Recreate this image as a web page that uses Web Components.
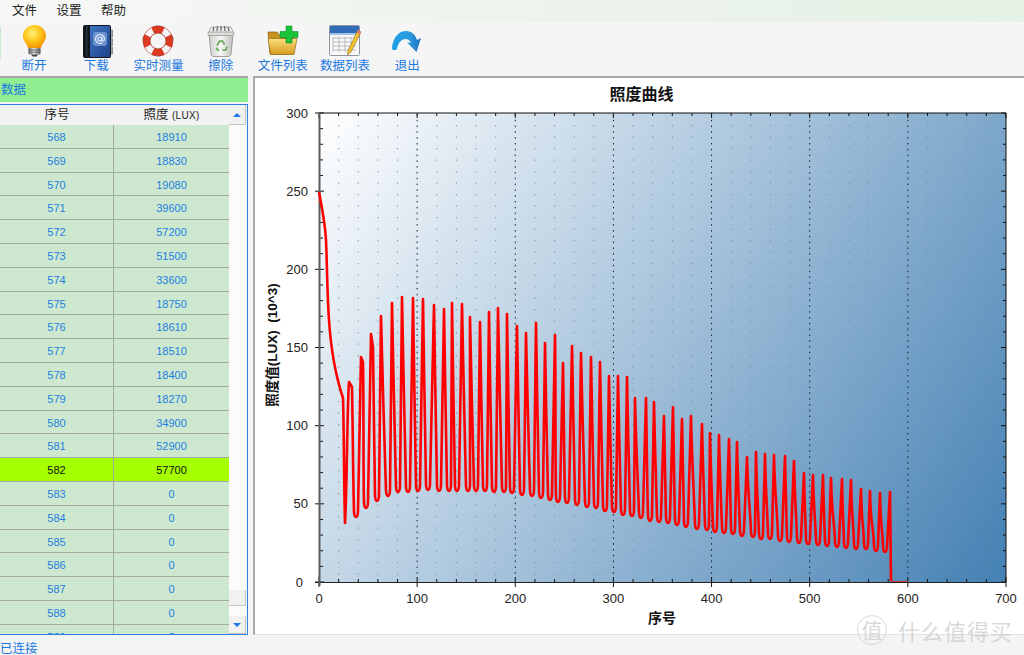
<!DOCTYPE html>
<html>
<head>
<meta charset="utf-8">
<title>照度曲线</title>
<style>
  html, body { margin: 0; padding: 0; height: 100%; overflow: hidden; background: #f4f4f4; }
  body { font-family: "Liberation Sans", "Noto Sans CJK SC", sans-serif; }
</style>
</head>
<body>
<app-window>
  <menu-bar slot="menu"></menu-bar>
  <tool-bar slot="tools">
    <tool-item label="断开">
      <svg width="32" height="32" viewBox="0 0 32 32">
        <defs>
          <radialGradient id="bulb" cx=".42" cy=".35" r=".7"><stop offset="0" stop-color="#fff27a"/><stop offset=".5" stop-color="#ffc61a"/><stop offset="1" stop-color="#f08a00"/></radialGradient>
          <linearGradient id="metal" x1="0" x2="1" y1="0" y2="0"><stop offset="0" stop-color="#6a6a6a"/><stop offset=".45" stop-color="#e6e6e6"/><stop offset="1" stop-color="#5e5e5e"/></linearGradient>
        </defs>
        <path d="M16.5 0C9.9 0 5 5 5 11c0 4.6 3 7 4.2 9.5.6 1.2.8 2 .8 3h13c0-1 .2-1.800.8-3C25 18 28 15.600 28 11 28 5 23.100 0 16.500 0z" fill="url(#bulb)"/>
        <rect x="10.500" y="23" width="12" height="6.500" rx="1" fill="url(#metal)"/>
        <path d="M10.500 25h12M10.500 27.200h12" stroke="#555" stroke-width=".8"/>
        <path d="M13 29.500h7l-1.500 2h-4z" fill="#444"/>
      </svg>
    </tool-item>
    <tool-item label="下载">
      <svg width="33" height="34" viewBox="-2 0 33 34">
        <defs><linearGradient id="cover" x1="0" x2="1" y1="0" y2="1"><stop offset="0" stop-color="#3f74c4"/><stop offset="1" stop-color="#1d4288"/></linearGradient></defs>
        <path d="M28 5h2.500v7H28zM28 13.500h2.500v7H28zM28 22h2.500v7H28z" fill="#9aa4b4" stroke="#5c6675" stroke-width=".6"/>
        <rect x="1" y="0" width="28" height="33" rx="2" fill="#11151c"/>
        <rect x="8" y="1" width="20" height="31" rx="1" fill="url(#cover)"/>
        <rect x="4" y="1" width="1.500" height="31" fill="#2c3340"/>
        <rect x="11" y="7" width="14" height="14" rx="3" fill="#7ea3dc" opacity=".75"/>
        <circle cx="18" cy="14" r="2" fill="none" stroke="#e8f0ff" stroke-width="1.100"/>
        <path d="M20 12v3c0 1.600 2.500 1.400 2.500-1a4.500 4.500 0 1 0-2 3.700" fill="none" stroke="#e8f0ff" stroke-width="1.100"/>
      </svg>
    </tool-item>
    <tool-item label="实时测量">
      <svg width="34" height="32" viewBox="0 0 34 32">
        <path d="M6 9C8 3 13 1 17 1s9 2 11 8M28 23c-2 6-7 8-11 8s-9-2-11-8" fill="none" stroke="#8c7f78" stroke-width="1"/>
        <path d="M5 8l-3 5 1 6 3 5M29 8l3 5-1 6-3 5" fill="none" stroke="#8c7f78" stroke-width="1.200"/>
        <circle cx="17" cy="16" r="11.500" fill="none" stroke="#dd3a22" stroke-width="7"/>
        <circle cx="17" cy="16" r="11.500" fill="none" stroke="#f2f4f6" stroke-width="7" pathLength="100" stroke-dasharray="10 15" stroke-dashoffset="-7.500"/>
        <circle cx="17" cy="16" r="15" fill="none" stroke="#9c2a18" stroke-width=".7" opacity=".6"/>
        <circle cx="17" cy="16" r="8" fill="#f4f4f4" stroke="#a52c18" stroke-width=".8"/>
      </svg>
    </tool-item>
    <tool-item label="擦除">
      <svg width="30" height="32" viewBox="0 0 30 32">
        <defs><linearGradient id="can" x1="0" x2="1" y1="0" y2="0"><stop offset="0" stop-color="#cfd1cd"/><stop offset=".5" stop-color="#f6f6f4"/><stop offset="1" stop-color="#bdbfbb"/></linearGradient></defs>
        <path d="M3 9l2 20c.1 1.500 1.200 2.500 2.500 2.500h15c1.300 0 2.400-1 2.500-2.500l2-20z" fill="url(#can)" stroke="#8d8f8b" stroke-width=".8"/>
        <path d="M5 2h20l3 7H2z" fill="#efefef" stroke="#9a9c98" stroke-width=".8"/>
        <path d="M7 6l1-4M11 6l.5-5M15 6V1M19 6l-.5-5M23 6l-1-4" stroke="#6d6f6c" stroke-width="1.300"/>
        <rect x="2" y="7" width="26" height="3.500" rx="1.200" fill="#dcdedb" stroke="#8d8f8b" stroke-width=".7"/>
        <g fill="none" stroke="#6fae60" stroke-width="1.800"><path d="M11 20.500l2.600-4.300h3l2 3.400"/><path d="M20.600 21.500l.4 1.100-1.500 2.500h-3.200"/><path d="M13.200 25.100h-1.500L10.300 22.700"/></g>
      </svg>
    </tool-item>
    <tool-item label="文件列表">
      <svg width="32" height="32" viewBox="0 0 32 32">
        <defs><linearGradient id="folder" x1="0" x2="0" y1="0" y2="1"><stop offset="0" stop-color="#fbdf7c"/><stop offset="1" stop-color="#d79a1e"/></linearGradient></defs>
        <path d="M1 7h9l2 3h14v19H3z" fill="#c8901c" stroke="#86621a" stroke-width=".7"/>
        <path d="M1 13.500h25l4 0-3 16H3.500z" fill="url(#folder)" stroke="#8f6a1c" stroke-width=".7"/>
        <path d="M19 1h6v5.500h6v6h-6V18h-6v-5.500h-6v-6h6z" fill="#19c33a" stroke="#0f8f2a" stroke-width=".6"/>
      </svg>
    </tool-item>
    <tool-item label="数据列表">
      <svg width="32" height="32" viewBox="0 0 32 32">
        <rect x=".5" y=".5" width="30" height="30" rx="1" fill="#f8f8f8" stroke="#8f96a0"/>
        <rect x="1" y="1" width="29" height="7" fill="#2f6db8"/>
        <rect x="1" y="8" width="29" height="2" fill="#9fc2e8"/>
        <path d="M4 13h23M4 17h23M4 21h23M4 25h23M4 12v15M10 12v15M16 12v15M22 12v15" stroke="#a9aeb4" stroke-width=".8" fill="none"/>
        <path d="M29 5l3 2-10 20-3.500 3 .5-4.500z" fill="#f4c430" stroke="#8a6c14" stroke-width=".6"/>
        <path d="M29 5l3 2-1.200 2.300-3-2z" fill="#e8707a"/>
      </svg>
    </tool-item>
    <tool-item label="退出">
      <svg width="32" height="32" viewBox="0 -2 32 32">
        <defs><linearGradient id="arrow" x1="0" x2="1" y1="0" y2="0"><stop offset="0" stop-color="#1b9fe6"/><stop offset=".6" stop-color="#2c9be0"/><stop offset="1" stop-color="#1f6fc0"/></linearGradient></defs>
        <path d="M1 21C2 10 8 4 15 4c6 0 9.500 4 11 9l4-2-4.500 14L16 15.500l4 .2C18.500 13 16.500 12 14.500 12c-4 0-7 3.500-8.500 9.500-.3 1-.9 1.500-2.500 1.500S.9 22.500 1 21z" fill="url(#arrow)"/>
      </svg>
    </tool-item>
  </tool-bar>
  <data-panel slot="left" title-text="数据"><data-table></data-table></data-panel>
  <chart-panel slot="right"></chart-panel>
  <status-bar slot="status">已连接</status-bar>
</app-window>
<site-mark></site-mark>

<script>
class appWindow extends HTMLElement {
  constructor() {
    super();
    this.attachShadow({ mode: "open" });
    this.shadowRoot.innerHTML = `
      <style>
        :host { display: flex; flex-direction: column; width: 1024px; height: 655px; }
        .main { display: flex; height: 559px; background: #f4f4f4; }
      </style>
      <slot name="menu"></slot>
      <slot name="tools"></slot>
      <div class="main"><slot name="left"></slot><slot name="right"></slot></div>
      <slot name="status"></slot>`;
  }
}

class menuBar extends HTMLElement {
  constructor() {
    super();
    this.attachShadow({ mode: "open" });
    this.shadowRoot.innerHTML = `
      <style>
        :host { display: flex; gap: 19.5px; height: 22px; padding: 0 0 4px 12px; box-sizing: border-box; align-items: center;
          background: linear-gradient(90deg, #f7f8f6 0%, #eff4ee 45%, #e4f1e4 100%); color: #222; font-size: 12.5px; }
      </style>
      <span>文件</span><span>设置</span><span>帮助</span>`;
  }
}

class toolBar extends HTMLElement {
  constructor() {
    super();
    this.attachShadow({ mode: "open" });
    this.shadowRoot.innerHTML = `
      <style>
        :host { display: flex; height: 54px; padding-left: 3px; box-sizing: border-box; background: #f5f5f5; position: relative; }
        .grip { position: absolute; left: 0; top: 5px; height: 33px; border-left: 1px dotted #a8dca8; }
      </style>
      <div class="grip"></div>
      <slot></slot>`;
  }
}

class toolItem extends HTMLElement {
  constructor() {
    super();
    this.attachShadow({ mode: "open" });
  }
  connectedCallback() {
    this.shadowRoot.innerHTML = `
      <style>
        :host { display: block; width: 62.2px; }
        .box { display: flex; flex-direction: column; align-items: center; }
        .icon { height: 34px; margin-top: 3px; display: flex; align-items: flex-start; }
        .label { font-size: 12.5px; line-height: 15px; color: #1a78e0; white-space: nowrap; }
      </style>
      <div class="box">
        <div class="icon"><slot></slot></div>
        <div class="label">${this.getAttribute("label")}</div>
      </div>`;
  }
}

class dataPanel extends HTMLElement {
  constructor() {
    super();
    this.attachShadow({ mode: "open" });
  }
  connectedCallback() {
    this.shadowRoot.innerHTML = `
      <style>
        :host { display: flex; flex-direction: column; width: 248px; margin-right: 5px; border-top: 2px solid #a8a8a8; box-sizing: border-box; height: 559px; }
        .head { height: 24px; flex: none; background: #90ee90; color: #1a78e0; font-size: 12.5px; line-height: 25px; padding-left: 1px; box-sizing: border-box; margin-bottom: 2px; }
      </style>
      <div class="head">${this.getAttribute("title-text")}</div>
      <slot></slot>`;
  }
}

class dataTable extends HTMLElement {
  constructor() {
    super();
    this.attachShadow({ mode: "open" });
  }
  getRows() {
    const values = [18910, 18830, 19080, 39600, 57200, 51500, 33600, 18750, 18610, 18510, 18400, 18270, 34900, 52900, 57700, 0, 0, 0, 0, 0, 0, 0];
    return values.map((v, i) => {
      const sel = 568 + i === 582 ? " sel" : "";
      return `<div class="row${sel}"><div class="c">${568 + i}</div><div class="c">${v}</div></div>`;
    }).join("");
  }
  connectedCallback() {
    this.shadowRoot.innerHTML = `
      <style>
        :host { display: flex; flex: 1; min-height: 0; border-top: 1px solid #2a82e4; border-right: 1px solid #2a82e4; border-bottom: 1px solid #2a82e4; box-sizing: border-box; overflow: hidden; background: #f6f6f6; }
        .grid { width: 229px; flex: none; overflow: hidden; }
        .top { height: 20px; display: grid; grid-template-columns: 114px 115px; background: #f2f2f2; color: #222; font-size: 12.5px; line-height: 21px; text-align: center; }
        .top small { font-size: 10px; letter-spacing: .3px; }
        .row { display: grid; grid-template-columns: 114px 115px; height: 23.8px; box-sizing: border-box; border-bottom: 1px solid #a6aaa6; background: #cde8cf; color: #1e7fe0; font-size: 11px; line-height: 25px; text-align: center; }
        .c:first-child { border-right: 1px solid #a6aaa6; }
        .sel { background: #a6ff00; color: #111; }
      </style>
      <div class="grid">
        <div class="top"><div>序号</div><div>照度 <small>(LUX)</small></div></div>
        ${this.getRows()}
      </div>
      <scroll-rail></scroll-rail>`;
  }
}

class scrollRail extends HTMLElement {
  constructor() {
    super();
    this.attachShadow({ mode: "open" });
    this.shadowRoot.innerHTML = `
      <style>
        :host { display: flex; flex-direction: column; width: 17px; flex: none; background: #fbfbfb; }
        .btn { height: 18px; flex: none; background: #f1f1f1; border-right: 1px solid #c4c4c4; border-bottom: 1px solid #c4c4c4; box-sizing: border-box; display: flex; align-items: center; justify-content: center; }
        .up { height: 20px; }
        .arrow { width: 0; height: 0; border-left: 4px solid transparent; border-right: 4px solid transparent; }
        .up .arrow { border-bottom: 4px solid #1a78e0; }
        .down .arrow { border-top: 4px solid #1a78e0; }
        .track { flex: 1; padding-top: 465px; box-sizing: border-box; }
        .thumb { height: 16px; background: #f1f1f1; border-right: 1px solid #c4c4c4; border-bottom: 1px solid #c4c4c4; box-sizing: border-box; }
      </style>
      <div class="btn up"><div class="arrow"></div></div>
      <div class="track"><div class="thumb"></div></div>
      <div class="btn down"><div class="arrow"></div></div>`;
  }
}

class chartPanel extends HTMLElement {
  constructor() {
    super();
    this.attachShadow({ mode: "open" });
  }
  // peak x, peak y, trough x, trough y, optional shoulder x, y
  curvePath() {
    const c = [
      [349,382,356,517,352,387],[361,357,366,508,363,362],[371,334,377,501,373,347],[381,316,388,496],[392,303,398,492],
      [402,297,408,492],[413,298,418,491],[423,299,428,490],[434,305,439,491],[444,309,449,491],[452,303,457,491],
      [462,304,468,491],[470,317,476,491],[480,322,485,491],[489,312,494,492],[498,308,504,492],[507,314,512,493],
      [517,326,522,495],[526,333,532,496],[536,323,541,498],[545,343,550,500],[555,335,558,502],[563,363,567,503],
      [572,346,577,505],[581,353,587,507],[591,357,596,508],[600,362,605,511],[609,376,614,512],[618,376,623,515],
      [627,377,632,516],[635,398,641,518],[646,398,650,521],[654,402,659,522],[664,416,668,523],[673,407,677,525],
      [682,419,686,527],[691,416,697,529],[702,424,707,530],[710,433,715,532],[719,435,724,533],[729,439,733,534],
      [737,442,742,536],[747,457,753,537],[756,452,761,539],[765,454,770,539],[774,455,780,541],[785,456,789,542],
      [794,461,799,543],[804,473,808,544],[813,475,818,545],[823,475,827,546],[831,478,837,547],[842,479,846,548],
      [851,480,856,549],[861,489,866,549],[870,491,876,551],[880,493,885,552]
    ];
    let d = "M319 192C322 208 325 222 326 240C327 260 327 290 329 320C331 350 337 380 343 398C344 430 344 490 345 523C347 490 347 410 349 382";
    c.forEach((p, i) => {
      const [px, py, tx, ty, sx, sy] = p;
      if (i > 0) d += `L${px} ${py}`;
      let fx = px, fy = py;
      if (sx) { d += `L${sx} ${sy}`; fx = sx; fy = sy; }
      d += `C${fx + .8} ${fy + 40} ${tx - 2.8} ${ty - 30} ${tx - 2} ${ty - 5}Q${tx - 1.6} ${ty} ${tx} ${ty}Q${tx + 1.800} ${ty} ${tx + 2} ${ty - 6}`;
    });
    d += "L890 492L891 581";
    return d;
  }
  ticks() {
    let s = "";
    for (let v = 0; v <= 700; v += 20) {
      const x = 319 + v * 0.9814;
      if (v % 100 === 0) {
        s += `<path d="M${x} 113v5M${x} 577v10" stroke="#111" fill="none"/>`;
      } else {
        s += `<path d="M${x} 113v3M${x} 582v-3" stroke="#111" fill="none"/>`;
        s += `<line x1="${x}" x2="${x}" y1="125" y2="578" class="minor"/>`;
      }
      if (v % 100 === 0 && v > 0 && v < 700) s += `<line x1="${x}" x2="${x}" y1="114" y2="578" class="major"/>`;
      if (v % 100 === 0) s += `<text x="${x}" y="603" text-anchor="middle">${v}</text>`;
    }
    for (let v = 0; v <= 300; v += 10) {
      const y = 582 - v * 1.5633;
      if (v % 50 === 0) {
        s += `<path d="M315 ${y}h9M1006 ${y}h-5" stroke="#111" fill="none"/>`;
        s += `<text x="${v === 0 ? 303 : 308}" y="${y + 4.5}" text-anchor="end">${v}</text>`;
      } else {
        s += `<path d="M320 ${y}h3M1006 ${y}h-3" stroke="#111" fill="none"/>`;
      }
    }
    return s;
  }
  connectedCallback() {
    this.shadowRoot.innerHTML = `
      <style>
        :host { display: block; width: 771px; height: 559px; box-sizing: border-box; background: #fff; border-top: 2px solid #a8a8a8; border-left: 2px solid #a8a8a8; border-bottom: 1px solid #e4e4e4; }
        svg { display: block; font-family: "Liberation Sans", "Noto Sans CJK SC", sans-serif; }
        text { font-size: 13px; fill: #222; white-space: pre; }
        .minor { stroke: #7c8b9a; stroke-dasharray: 1.2 10.3; }
        .major { stroke: #14202c; stroke-dasharray: 1.500 4.300; }
        text.title { font-size: 16px; font-weight: bold; fill: #111; }
        text.axis { font-size: 14px; font-weight: bold; fill: #111; }
        text.side { font-size: 13.5px; font-weight: bold; fill: #111; }
      </style>
      <svg width="769" height="556" viewBox="255 78 769 556">
        <defs>
          <linearGradient id="plot" gradientUnits="userSpaceOnUse" x1="319" y1="113" x2="1009" y2="560">
            <stop offset="0" stop-color="#ffffff"/><stop offset="1" stop-color="#4682b4"/>
          </linearGradient>
        </defs>
        <text class="title" x="641.500" y="100" text-anchor="middle">照度曲线</text>
        <rect x="319" y="113" width="687" height="469" fill="url(#plot)"/>
        ${this.ticks()}
        <path d="M319 113H1006V582" fill="none" stroke="#111" stroke-width="1"/>
        <path d="M315 582.500H1006" fill="none" stroke="#222" stroke-width="1"/>
        <path d="M319.500 113V586" fill="none" stroke="#5c5c5c" stroke-width="2"/>
        <path d="${this.curvePath()}" fill="none" stroke="#ff0000" stroke-width="2.600" stroke-linejoin="round"/>
        <path d="M891 581.500H908" fill="none" stroke="#c83030" stroke-width="1"/>
        <text class="axis" x="662" y="623" text-anchor="middle">序号</text>
        <text class="side" transform="translate(277 345) rotate(-90)" text-anchor="middle">照度值(LUX)  (10^3)</text>
      </svg>`;
  }
}

class statusBar extends HTMLElement {
  constructor() {
    super();
    this.attachShadow({ mode: "open" });
    this.shadowRoot.innerHTML = `
      <style>
        :host { display: block; height: 20px; background: #f4f4f4; color: #1a78e0; font-size: 12.5px; line-height: 29px; overflow: hidden; }
      </style>
      <slot></slot>`;
  }
}

class siteMark extends HTMLElement {
  constructor() {
    super();
    this.attachShadow({ mode: "open" });
    this.shadowRoot.innerHTML = `
      <style>
        :host { position: absolute; left: 857px; top: 615px; display: flex; align-items: center; gap: 11px; color: rgba(205,205,205,.75); font-family: "Noto Sans CJK SC", sans-serif; }
        .seal { width: 28px; height: 28px; border: 1px solid rgba(205,205,205,.75); border-radius: 50%; font-size: 21px; line-height: 27px; text-align: center; }
        .name { font-size: 22px; line-height: 30px; letter-spacing: 1px; white-space: nowrap; }
      </style>
      <div class="seal">值</div><div class="name">什么值得买</div>`;
  }
}

customElements.define("app-window", appWindow);
customElements.define("menu-bar", menuBar);
customElements.define("tool-bar", toolBar);
customElements.define("tool-item", toolItem);
customElements.define("data-panel", dataPanel);
customElements.define("data-table", dataTable);
customElements.define("scroll-rail", scrollRail);
customElements.define("chart-panel", chartPanel);
customElements.define("status-bar", statusBar);
customElements.define("site-mark", siteMark);
</script>
</body>
</html>
